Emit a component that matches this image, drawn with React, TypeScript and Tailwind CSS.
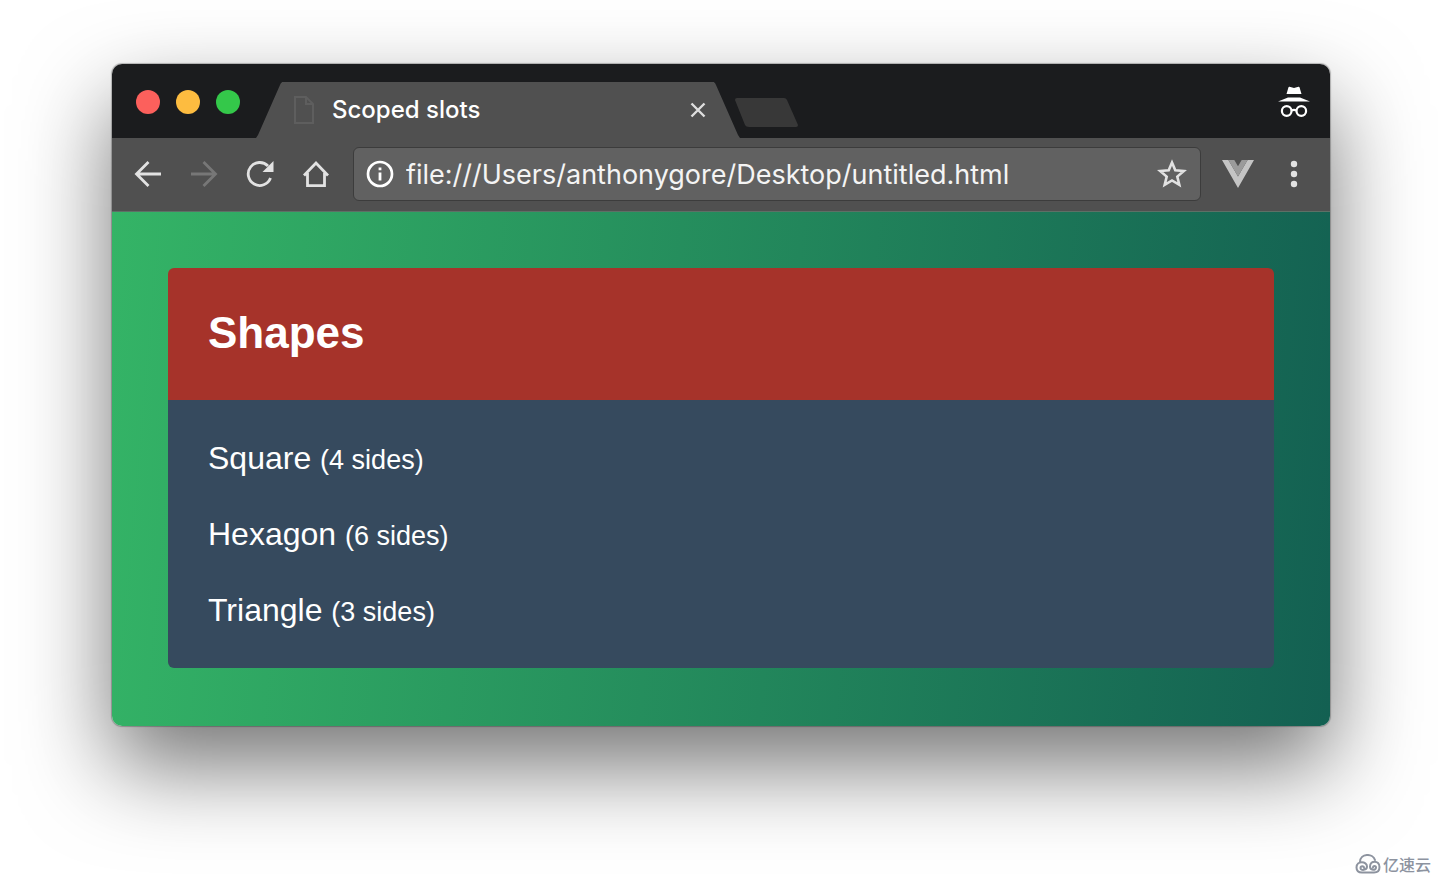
import type { ReactNode } from "react";

type Shape = {
  name: string;
  sides: number;
};

const shapes: Shape[] = [
  { name: "Square", sides: 4 },
  { name: "Hexagon", sides: 6 },
  { name: "Triangle", sides: 3 },
];

function IconButton({ label, disabled, children }: { label: string; disabled?: boolean; children: ReactNode }) {
  return (
    <button type="button" aria-label={label} disabled={disabled} className="shrink-0 text-[#e2e2e2] disabled:text-[#777777]">
      {children}
    </button>
  );
}

function TrafficLights() {
  return (
    <div className="flex shrink-0 gap-4 self-center pt-0.5">
      <button type="button" aria-label="Close window" className="size-6 rounded-full bg-[#fc605c]" />
      <button type="button" aria-label="Minimize window" className="size-6 rounded-full bg-[#fdbc40]" />
      <button type="button" aria-label="Zoom window" className="size-6 rounded-full bg-[#34c84a]" />
    </div>
  );
}

function Tab({ title }: { title: string }) {
  return (
    <div className="flex h-14 w-[484px] min-w-0">
      <svg className="h-14 w-[26px] shrink-0" viewBox="0 0 26 56" fill="#505050">
        <path d="M0 56L2 53L24 3Q25 0 27 0V56Z" />
      </svg>
      <div className="flex min-w-0 flex-1 items-center gap-4 bg-[#505050] pr-2 pl-2.5">
        <svg className="h-7 w-6 shrink-0" viewBox="0 0 24 28" fill="none" stroke="#5e5e5e" strokeWidth="2">
          <path d="M3 1H14L21 8V27H3ZM14 1V8H21" />
        </svg>
        <span className="min-w-0 flex-1 truncate text-2xl font-medium text-white">{title}</span>
        <button type="button" aria-label="Close tab" className="shrink-0 text-[#dedede]">
          <svg className="size-4" viewBox="0 0 16 16" fill="none" stroke="currentColor" strokeWidth="2.4">
            <path d="M1.5 1.5L14.5 14.5M14.5 1.5L1.5 14.5" />
          </svg>
        </button>
      </div>
      <svg className="h-14 w-[26px] shrink-0" viewBox="0 0 26 56" fill="#505050">
        <path d="M26 56L24 53L2 3Q1 0 -1 0V56Z" />
      </svg>
    </div>
  );
}

function IncognitoIcon() {
  return (
    <svg className="h-8 w-8 shrink-0" viewBox="0 0 32 32" role="img" aria-label="Incognito">
      <path fill="#fff" d="M10.5 1.2Q10.8 .6 11.5 .8L16 2L20.500 .8Q21.200 .6 21.500 1.200L23.500 8H8.500ZM10 11.500H22L32 15.500H0Z" />
      <g fill="none" stroke="#fff" strokeWidth="2.200">
        <circle cx="8.700" cy="25" r="4.800" />
        <circle cx="23.300" cy="25" r="4.800" />
        <path d="M13.500 24.500Q16 23.300 18.500 24.500" />
      </g>
    </svg>
  );
}

function TitleBar() {
  return (
    <div className="flex h-[74px] items-end bg-[#1b1c1e] pr-5 pl-6">
      <TrafficLights />
      <div className="flex min-w-0 flex-1 items-end pl-4">
        <Tab title="Scoped slots" />
        <button type="button" aria-label="New tab" className="-ml-1.5 shrink-0 pb-2.5">
          <svg className="h-[30px] w-16" viewBox="0 0 64 30" fill="#383838">
            <path d="M3 0H50Q52 0 53 2L64 27Q64 29 62 29H15Q12 29 11 27L1 2Q1 0 3 0Z" />
          </svg>
        </button>
      </div>
      <div className="shrink-0 self-center pt-0.5">
        <IncognitoIcon />
      </div>
    </div>
  );
}

function AddressBar({ url }: { url: string }) {
  return (
    <div className="flex h-[54px] min-w-0 flex-1 items-center gap-3 rounded-md border border-[#3c3c3c] bg-[#616161] px-3">
      <svg className="size-7 shrink-0" viewBox="0 0 28 28" role="img" aria-label="Site information">
        <circle cx="14" cy="14" r="12" fill="none" stroke="#fff" strokeWidth="2.700" />
        <path fill="#fff" d="M12.600 7.500H15.400V10.300H12.600ZM12.600 12.500H15.400V20.500H12.600Z" />
      </svg>
      <input
        type="text"
        aria-label="Address"
        defaultValue={url}
        className="min-w-0 flex-1 bg-transparent pt-1 text-[27px] text-[#f4f4f4] outline-none"
      />
      <IconButton label="Bookmark this page">
        <svg className="size-8" viewBox="0 0 32 32" fill="none" stroke="currentColor" strokeWidth="2.600">
          <path d="M16 4.500L19.300 12.300L27.800 13L21.300 18.600L23.300 26.800L16 22.400L8.700 26.800L10.700 18.600L4.200 13L12.700 12.300Z" />
        </svg>
      </IconButton>
    </div>
  );
}

function Toolbar() {
  return (
    <div className="flex h-[74px] items-center border-b border-[#5d7066] bg-[#505050] pr-5 pb-0.5 pl-5">
      <div className="flex shrink-0 gap-6 pr-[21px]">
        <IconButton label="Back">
          <svg className="size-8" viewBox="0 0 32 32" fill="none" stroke="currentColor" strokeWidth="2.800">
            <path d="M29 16H5M16.500 4L4.500 16L16.500 28" />
          </svg>
        </IconButton>
        <IconButton label="Forward" disabled>
          <svg className="size-8" viewBox="0 0 32 32" fill="none" stroke="currentColor" strokeWidth="2.800">
            <path d="M3 16H27M15.500 4L27.500 16L15.500 28" />
          </svg>
        </IconButton>
        <IconButton label="Reload">
          <svg className="size-8" viewBox="0 0 32 32" fill="none" stroke="currentColor" strokeWidth="2.800">
            <path d="M26.500 20A11.500 11.500 0 1 1 24 8" />
            <path d="M29.500 3V14H18.500Z" fill="currentColor" stroke="none" />
          </svg>
        </IconButton>
        <IconButton label="Home">
          <svg className="size-8" viewBox="0 0 32 32" fill="none" stroke="currentColor" strokeWidth="2.800">
            <path d="M4 17.500L16 5L28 17.500M7.500 15V27.600H24.500V15" />
          </svg>
        </IconButton>
      </div>
      <AddressBar url="file:///Users/anthonygore/Desktop/untitled.html" />
      <div className="flex shrink-0 items-center gap-6 pl-[21px]">
        <IconButton label="Vue devtools">
          <svg className="h-7 w-8" viewBox="0 0 32 28">
            <path fill="#c4c4c4" d="M0 0H6.400L16 16.500L25.600 0H32L16 28Z" />
            <path fill="#9b9b9b" d="M6.400 0H12.300L16 6.300L19.700 0H25.600L16 16.500Z" />
          </svg>
        </IconButton>
        <IconButton label="Menu">
          <svg className="size-8" viewBox="0 0 32 32" fill="currentColor">
            <circle cx="16" cy="6" r="3.200" />
            <circle cx="16" cy="16" r="3.200" />
            <circle cx="16" cy="26" r="3.200" />
          </svg>
        </IconButton>
      </div>
    </div>
  );
}

function ShapeList() {
  return (
    <section className="overflow-hidden rounded-md font-['Liberation_Sans',Arial,sans-serif] text-white">
      <header className="bg-[#a6332a] px-10 pt-10 pb-[42px]">
        <h1 className="text-[44px] leading-[50px] font-bold">Shapes</h1>
      </header>
      <ul className="flex flex-col gap-10 bg-[#364a5e] px-10 py-10">
        {shapes.map((shape) => (
          <li key={shape.name} className="text-[32px] leading-9">
            {shape.name} <small className="text-[27px] leading-none">({shape.sides} sides)</small>
          </li>
        ))}
      </ul>
    </section>
  );
}

function Watermark() {
  return (
    <footer className="flex items-center justify-end gap-0.5 pr-[11px] pb-3 text-[#8d939f]">
      <svg className="h-5 w-[26px]" viewBox="0 0 26 20" fill="none" stroke="currentColor" strokeWidth="2" strokeLinecap="round">
        <path d="M5 8C5 -1 18 -1 20 6" />
        <path d="M9 14C9 11.500 5.500 11.500 5.500 14C5.500 17 12 16.500 12 12.500C12 7 1.500 6.500 1.500 13.500C1.500 17 4 18.500 7 18.500H19C22.500 18.500 24.500 16.500 24.500 13C24.500 6 15 6 15 12.500C15 16.500 21 17 21 13.500C21 11.500 18 11.500 18 13.500" />
      </svg>
      <span className="font-['Noto_Sans_CJK_SC',sans-serif] text-base leading-5 font-medium">亿速云</span>
    </footer>
  );
}

export default function App() {
  return (
    <div className="flex min-h-screen flex-col justify-between overflow-hidden bg-white font-['Inter',sans-serif]">
      <main className="px-28 pt-16">
        <div className="rounded-[10px] shadow-[0_0_1px_1px_rgba(0,0,0,0.25),0_40px_90px_rgba(0,0,0,0.55)]">
          <div className="overflow-hidden rounded-[10px]">
            <TitleBar />
            <Toolbar />
            <div className="bg-linear-[95deg] from-[#34b466] to-[#136052] px-14 pt-14 pb-[58px]">
              <ShapeList />
            </div>
          </div>
        </div>
      </main>
      <Watermark />
    </div>
  );
}
